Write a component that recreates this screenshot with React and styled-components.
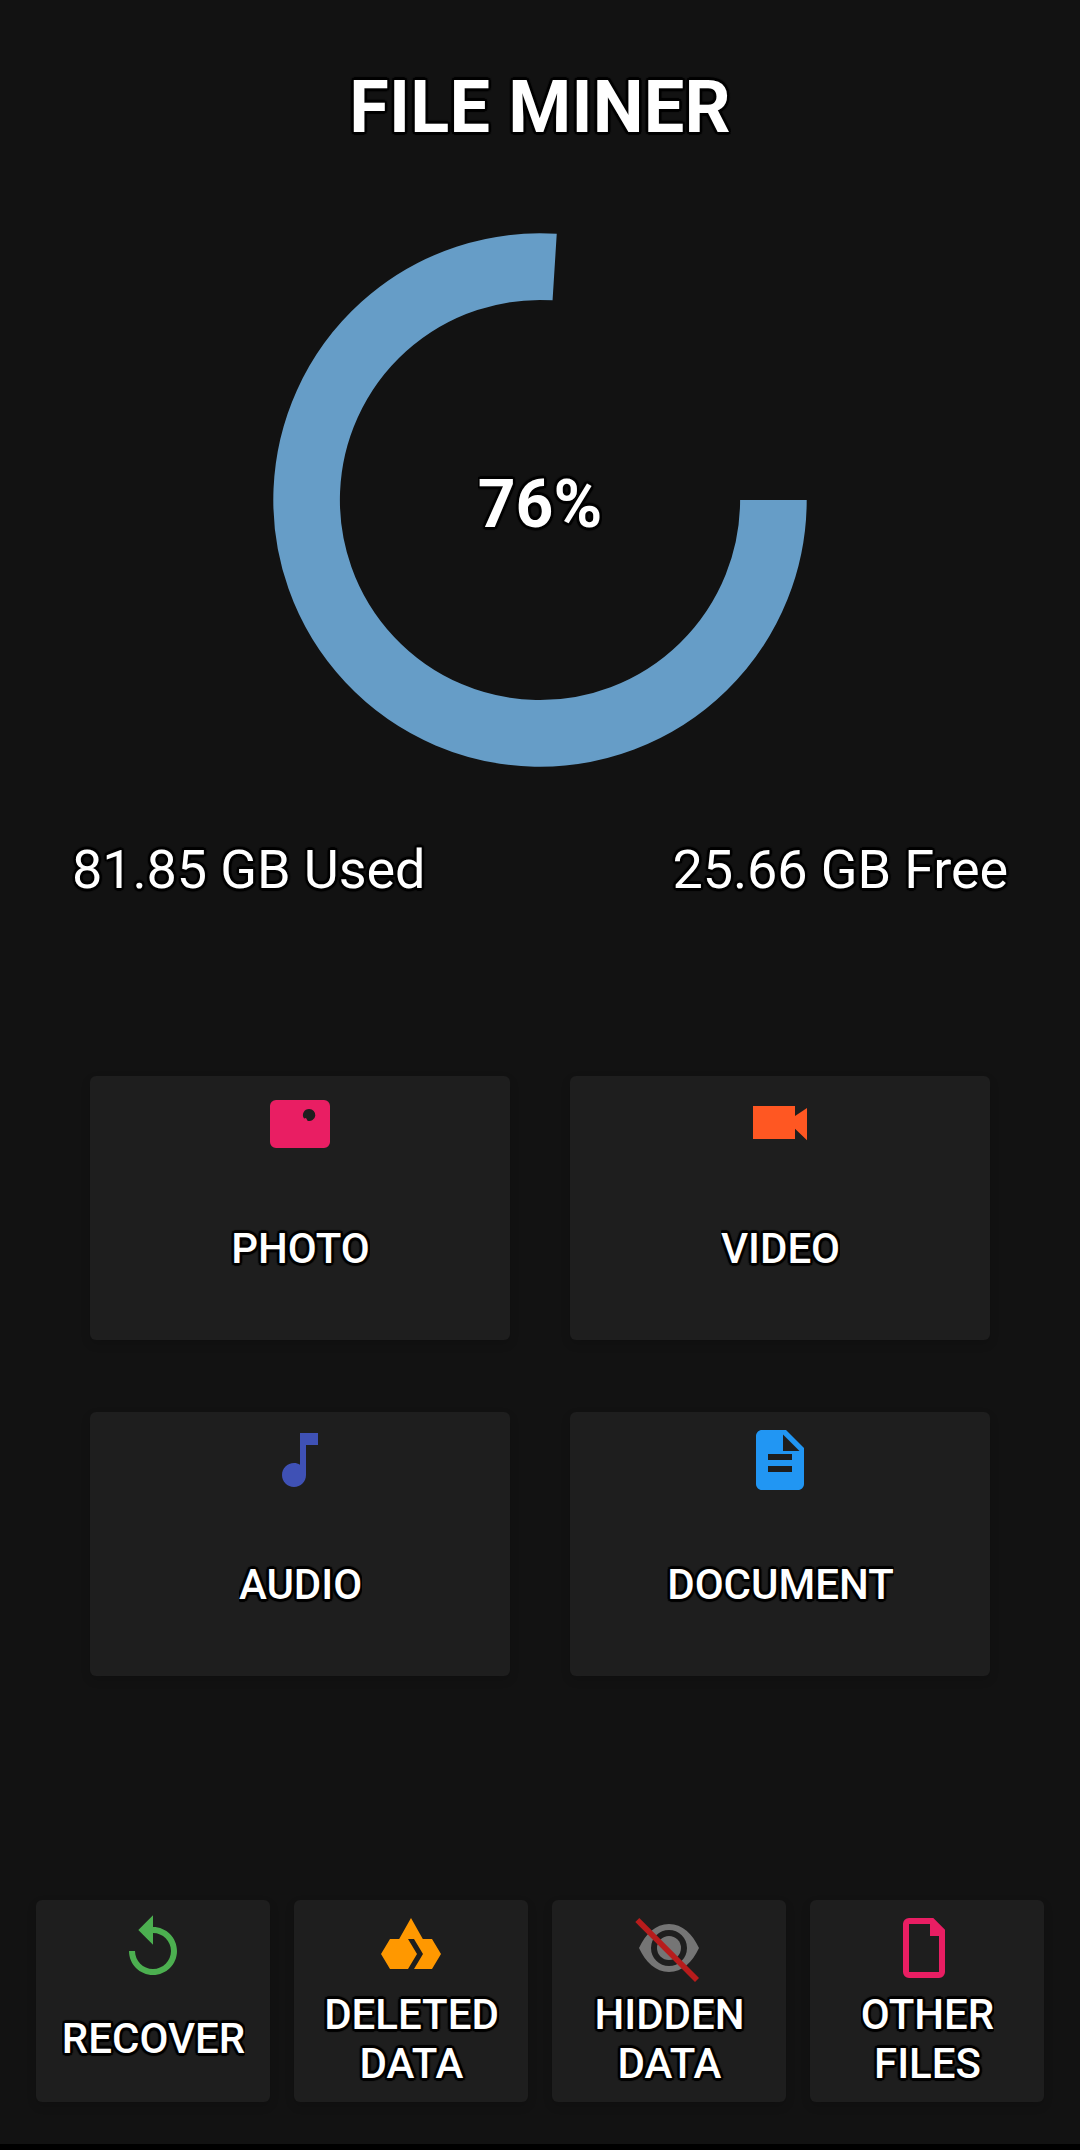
import React from "react";
import styled, { createGlobalStyle, css } from "styled-components";

const GlobalStyle = createGlobalStyle`
  *, *::before, *::after { box-sizing: border-box; }
  html, body { margin: 0; background: #121212; }
`;

const outline = css`
  color: #fff;
  text-shadow: 2.6px 0 1px #000, -2.6px 0 1px #000, 0 2.6px 1px #000,
    0 -2.6px 1px #000, 2px 2px 1px #000, -2px 2px 1px #000, 2px -2px 1px #000,
    -2px -2px 1px #000, 1px 0 1px #000, -1px 0 1px #000, 0 1px 1px #000,
    0 -1px 1px #000;
`;

const Screen = styled.main`
  display: flex;
  flex-direction: column;
  width: 1080px;
  height: 2150px;
  background: #121212;
  border-bottom: 6px solid #000;
  font-family: Roboto, "Liberation Sans", sans-serif;
  overflow: hidden;
`;

const Title = styled.h1`
  ${outline}
  align-self: center;
  margin: 66px 0 0;
  font-size: 72px;
  line-height: 84px;
  font-weight: 700;
  letter-spacing: 0.2px;
  overflow: clip;
`;

const Chart = styled.section`
  display: grid;
  place-items: center;
  align-self: center;
  width: 534px;
  height: 534px;
  margin-top: 83px;

  > * { grid-area: 1 / 1; }
`;

const Percent = styled.span`
  ${outline}
  margin-top: 9px;
  font-size: 66px;
  line-height: 78px;
  font-weight: 700;
  overflow: clip;
`;

const Usage = styled.section`
  display: flex;
  justify-content: space-between;
  margin-top: 71px;
  padding: 0 72px;
`;

const UsageText = styled.span`
  ${outline}
  font-size: 54px;
  line-height: 64px;
  letter-spacing: -0.12px;
`;

const TypeGrid = styled.section`
  display: grid;
  grid-template-columns: repeat(2, 420px);
  grid-auto-rows: 264px;
  justify-content: center;
  gap: 72px 60px;
  margin-top: 174px;
`;

const ActionRow = styled.nav`
  display: grid;
  grid-template-columns: repeat(4, 234px);
  grid-auto-rows: 202px;
  justify-content: center;
  gap: 24px;
  margin-top: 224px;
`;

const Tile = styled.button`
  display: flex;
  flex-direction: column;
  align-items: center;
  gap: ${(p) => (p.$compact ? 6 : 64)}px;
  padding: 12px 12px 0;
  border: 0;
  border-radius: 6px;
  background: #1e1e1e;
  box-shadow: 0 4px 10px rgba(0, 0, 0, 0.15);
  font: inherit;
`;

const LabelArea = styled.span`
  display: flex;
  align-items: safe center;
  height: ${(p) => (p.$compact ? 97 : 49)}px;
  padding-left: 1px;
`;

const Label = styled.span`
  ${outline}
  font-size: 42px;
  line-height: 49px;
  font-weight: 500;
  text-align: center;
  white-space: pre-line;
  overflow: clip;
`;

const Icon = styled.svg.attrs({ viewBox: "0 0 24 24" })`
  flex: none;
  width: 72px;
  height: 72px;
  fill: ${(p) => p.$color};
`;

const types = [
  {
    label: "PHOTO",
    color: "#e91e63",
    art: (
      <path
        fillRule="evenodd"
        d="M4 4h16a2 2 0 0 1 2 2v12a2 2 0 0 1-2 2H4a2 2 0 0 1-2-2V6a2 2 0 0 1 2-2zM15 7a2 2 0 0 0-1.65 3.15L14 10l.5.9A2 2 0 1 0 15 7z"
      />
    ),
  },
  {
    label: "VIDEO",
    color: "#ff5722",
    art: <path d="M3 6h14v3.35l4-2.7v10.8l-4-3.9V17H3z" />,
  },
  {
    label: "AUDIO",
    color: "#3f51b5",
    art: (
      <path d="M12 3v10.55c-.59-.34-1.27-.55-2-.55-2.21 0-4 1.79-4 4s1.79 4 4 4 4-1.79 4-4V7h4V3z" />
    ),
  },
  {
    label: "DOCUMENT",
    color: "#2196f3",
    art: (
      <path
        fillRule="evenodd"
        d="M14 2H6c-1.1 0-2 .9-2 2v16c0 1.1.9 2 2 2h12c1.1 0 2-.9 2-2V8zM13 3.5 18.5 9H13zM8 10h8v2H8zM8 14h8v2H8z"
      />
    ),
  },
];

const actions = [
  {
    label: "RECOVER",
    color: "#4caf50",
    art: (
      <path d="M12 5V1.1L7.1 6l4.9 4.9V7c3.31 0 6 2.69 6 6s-2.69 6-6 6-6-2.69-6-6H4c0 4.42 3.58 8 8 8s8-3.58 8-8-3.58-8-8-8z" />
    ),
  },
  {
    label: "DELETED\nDATA",
    color: "#ff9800",
    art: (
      <>
        <path d="M12 2 8.06 9H5l-3 5 3 5h6l3-5-3-5h4.94z" />
        <path d="M13 9h6l3 5-3 5h-6l3-5z" />
      </>
    ),
  },
  {
    label: "HIDDEN\nDATA",
    color: "#757575",
    art: (
      <>
        <path
          fillRule="evenodd"
          d="M12 4C7.5 4 4.2 7.3 2 12c2.2 4.7 5.5 8 10 8s7.8-3.3 10-8c-2.2-4.7-5.5-8-10-8zM12 6a6 6 0 1 0 0 12 6 6 0 0 0 0-12z"
        />
        <circle cx="12" cy="12" r="4" />
        <path d="m1.44 2.67 19.9 20" stroke="#b71c1c" strokeWidth="1.9" />
      </>
    ),
  },
  {
    label: "OTHER\nFILES",
    color: "#e91e63",
    art: (
      <path
        fillRule="evenodd"
        d="M6 2h8.1L18 5.9V20a2 2 0 0 1-2 2H6a2 2 0 0 1-2-2V4a2 2 0 0 1 2-2zM6 4v16h10V8h-3V4z"
      />
    ),
  },
];

function StorageRing({ value }) {
  const radius = 233.4;
  const angle = (value / 100) * 2 * Math.PI;
  const x = 267 + radius * Math.cos(angle);
  const y = 267 + radius * Math.sin(angle);
  return (
    <svg width="534" height="534" viewBox="0 0 534 534" fill="none">
      <path
        d={`M${267 + radius} 267A${radius} ${radius} 0 ${value > 50 ? 1 : 0} 1 ${x} ${y}`}
        stroke="#669dc7"
        strokeWidth="66.6"
      />
    </svg>
  );
}

function TileButton({ item, compact }) {
  return (
    <Tile $compact={compact}>
      <Icon $color={item.color}>{item.art}</Icon>
      <LabelArea $compact={compact}>
        <Label>{item.label}</Label>
      </LabelArea>
    </Tile>
  );
}

export default function App() {
  return (
    <>
      <GlobalStyle />
      <Screen>
        <Title>FILE MINER</Title>
        <Chart>
          <StorageRing value={76} />
          <Percent>76%</Percent>
        </Chart>
        <Usage>
          <UsageText>81.85 GB Used</UsageText>
          <UsageText>25.66 GB Free</UsageText>
        </Usage>
        <TypeGrid>
          {types.map((item) => (
            <TileButton key={item.label} item={item} />
          ))}
        </TypeGrid>
        <ActionRow>
          {actions.map((item) => (
            <TileButton key={item.label} item={item} compact />
          ))}
        </ActionRow>
      </Screen>
    </>
  );
}
